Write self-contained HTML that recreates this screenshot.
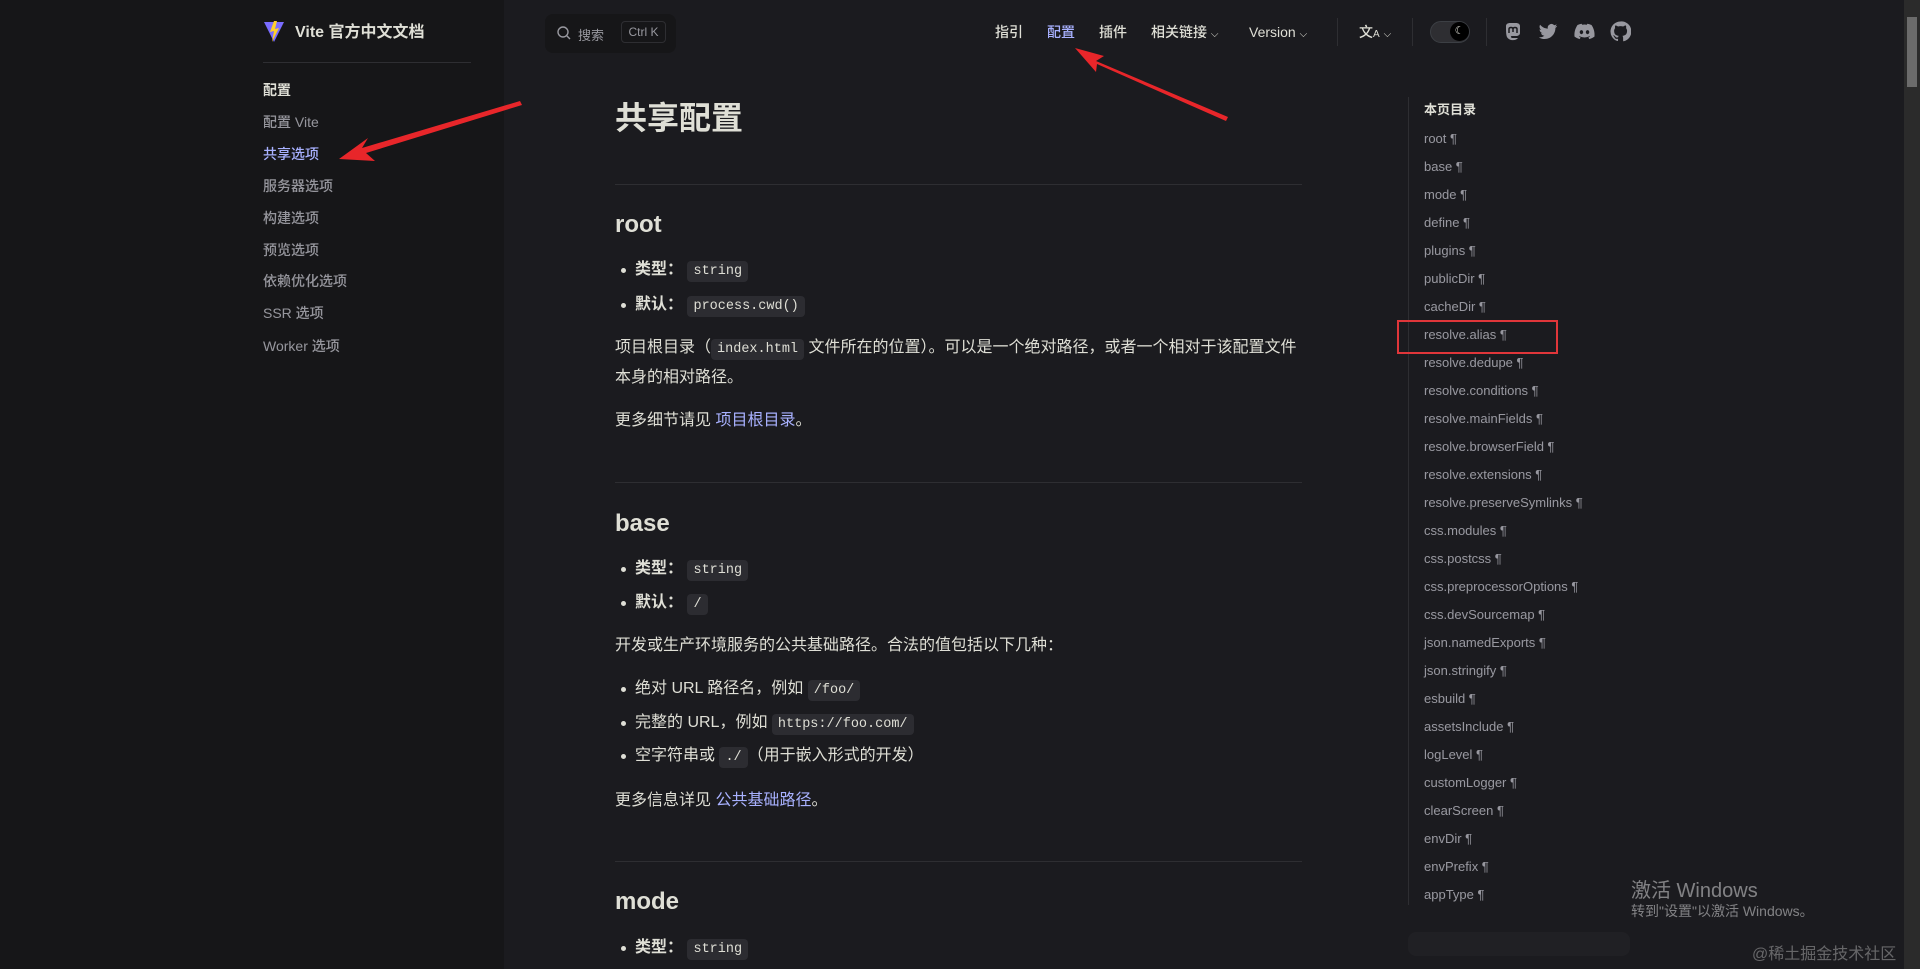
<!DOCTYPE html>
<html><head><meta charset="utf-8"><style>
*{margin:0;padding:0;box-sizing:border-box}
body{width:1920px;height:969px;overflow:hidden;background:#1b1b1f;font-family:"Liberation Sans","Noto Sans CJK SC",sans-serif;color:#dfdfd6;position:relative}
.a{position:absolute;white-space:nowrap}
.side{position:absolute;left:0;top:0;width:504px;height:969px;background:#161618}
.sl{position:absolute;left:263px;font-size:14px;color:rgba(235,235,245,.6);font-weight:500;line-height:20px}
.nav{position:absolute;top:22px;font-size:14px;font-weight:500;color:#dfdfd6;line-height:20px}
code{font-family:"Liberation Mono",monospace;font-size:13.5px;background:#2c2c31;color:#dfdfd6;padding:3px 6px;border-radius:4px}
.p{position:absolute;left:615px;font-size:16px;line-height:24px;color:#dfdfd6;white-space:nowrap}
.li{position:absolute;left:635px;font-size:16px;line-height:24px;white-space:nowrap}
.li:before{content:"";position:absolute;left:-14px;top:10px;width:5px;height:5px;border-radius:50%;background:#dfdfd6}
.h2{position:absolute;left:615px;font-size:24px;font-weight:600;line-height:32px}
.hr{position:absolute;left:615px;width:687px;height:1px;background:#2e2e32}
.toc{position:absolute;left:1424px;font-size:13px;font-weight:500;color:rgba(235,235,245,.6);line-height:20px}
a{color:#a8b1ff;text-decoration:none}
</style></head><body>
<div class="side"></div>
<svg class="a" style="left:263px;top:20px" width="22" height="24" viewBox="0 0 22 24"><path d="M1 2 L11 22 L21 2 Z" fill="#7a6cff"/><path d="M11 1 L7 12 L11 11 L9 22 L16 8 L12 9 L14 1Z" fill="#ffd028"/></svg>
<div class="a" style="left:295px;top:22px;font-size:16px;font-weight:700;color:#dfdfd6;line-height:22px">Vite 官方中文文档</div>
<div class="a" style="left:263px;top:62px;width:208px;height:1px;background:#2e2e32"></div>
<div class="sl" style="top:80px;color:#dfdfd6;font-weight:700">配置</div>
<div class="sl" style="top:112px">配置 Vite</div>
<div class="sl" style="top:144px;color:#a8b1ff">共享选项</div>
<div class="sl" style="top:176px">服务器选项</div>
<div class="sl" style="top:208px">构建选项</div>
<div class="sl" style="top:240px">预览选项</div>
<div class="sl" style="top:271px">依赖优化选项</div>
<div class="sl" style="top:303px">SSR 选项</div>
<div class="sl" style="top:336px">Worker 选项</div>
<div class="a" style="left:545px;top:14px;width:131px;height:39px;background:#161618;border-radius:8px"></div>
<svg class="a" style="left:556px;top:25px" width="16" height="16" viewBox="0 0 16 16"><circle cx="7" cy="7" r="5" fill="none" stroke="#98989f" stroke-width="1.4"/><path d="M11 11l3 3" stroke="#98989f" stroke-width="1.4"/></svg>
<div class="a" style="left:578px;top:25px;font-size:13px;color:#98989f">搜索</div>
<div class="a" style="left:621px;top:21px;width:45px;height:22px;border:1px solid #2e2e32;border-radius:4px;font-size:12px;color:#98989f;text-align:center;line-height:20px">Ctrl K</div>
<div class="nav" style="left:995px">指引</div>
<div class="nav" style="left:1047px;color:#a8b1ff">配置</div>
<div class="nav" style="left:1099px">插件</div>
<div class="nav" style="left:1151px">相关链接 <span style="font-size:10px">⌵</span></div>
<div class="nav" style="left:1249px">Version <span style="font-size:10px">⌵</span></div>
<div class="a" style="left:1337px;top:18px;width:1px;height:28px;background:#2e2e32"></div>
<div class="nav" style="left:1359px;font-size:14px">文<span style="font-size:10px">A</span> <span style="font-size:10px">⌵</span></div>
<div class="a" style="left:1412px;top:18px;width:1px;height:28px;background:#2e2e32"></div>
<div class="a" style="left:1430px;top:21px;width:40px;height:22px;border-radius:11px;background:#2e2e32;border:1px solid #3c3f44"></div>
<div class="a" style="left:1450px;top:22px;width:19px;height:19px;border-radius:50%;background:#000;color:#dfdfd6;font-size:11px;text-align:center;line-height:19px">☾</div>
<div class="a" style="left:1486px;top:18px;width:1px;height:28px;background:#2e2e32"></div>
<svg class="a" style="left:1503px;top:22px" width="20" height="20" viewBox="0 0 20 20"><path d="M3 4c0-2 2-3 4-3h6c2 0 4 1 4 3v7c0 2-2 3-4 3H9c-1 0-2 1 0 2h6c-2 3-9 3-11-1C3 13 3 8 3 4z" fill="#98989f"/><path d="M6 11V7c0-2 4-2 4 0v3M10 10V7c0-2 4-2 4 0v4" stroke="#1b1b1f" stroke-width="1.5" fill="none"/></svg>
<svg class="a" style="left:1538px;top:22px" width="20" height="20" viewBox="0 0 24 24"><path d="M23 4.6c-.8.4-1.7.6-2.6.7.9-.6 1.6-1.4 2-2.5-.9.5-1.9.9-2.9 1.1A4.5 4.5 0 0 0 11.8 8C8 7.8 4.7 6 2.5 3.3c-1.3 2.2-.5 4.8 1.4 6.1-.7 0-1.4-.2-2-.6 0 2.2 1.6 4.1 3.6 4.5-.7.2-1.4.2-2 .1.6 1.8 2.3 3.1 4.2 3.1A9 9 0 0 1 1 18.4 12.8 12.8 0 0 0 8 20.4c8.3 0 13-7 12.9-13.3.9-.6 1.6-1.4 2.1-2.5z" fill="#98989f"/></svg>
<svg class="a" style="left:1574px;top:22px" width="21" height="20" viewBox="0 0 24 20"><path d="M20 2A19 19 0 0 0 15.3.5l-.6 1.2a18 18 0 0 0-5.4 0L8.7.5A19 19 0 0 0 4 2C1 6.5.2 10.9.6 15.3A19 19 0 0 0 6.4 18.2l1.2-1.9c-.7-.3-1.3-.6-1.9-1l.5-.4a13.5 13.5 0 0 0 11.6 0l.5.4c-.6.4-1.2.7-1.9 1l1.2 1.9a19 19 0 0 0 5.8-2.9C23.9 10.2 22.6 5.8 20 2zM8.5 12.5c-1.1 0-2-1-2-2.3s.9-2.3 2-2.3 2 1 2 2.3-.9 2.3-2 2.3zm7 0c-1.1 0-2-1-2-2.3s.9-2.3 2-2.3 2 1 2 2.3-.9 2.3-2 2.3z" fill="#98989f"/></svg>
<svg class="a" style="left:1610px;top:21px" width="21" height="21" viewBox="0 0 24 24"><path d="M12 .5a11.5 11.5 0 0 0-3.6 22.4c.6.1.8-.3.8-.6v-2c-3.2.7-3.9-1.5-3.9-1.5-.5-1.3-1.3-1.7-1.3-1.7-1-.7.1-.7.1-.7 1.2.1 1.8 1.2 1.8 1.2 1 1.8 2.7 1.3 3.4 1 .1-.8.4-1.3.7-1.6-2.6-.3-5.3-1.3-5.3-5.7 0-1.3.5-2.3 1.2-3.1-.1-.3-.5-1.5.1-3.1 0 0 1-.3 3.2 1.2a11 11 0 0 1 5.8 0c2.2-1.5 3.2-1.2 3.2-1.2.6 1.6.2 2.8.1 3.1.7.8 1.2 1.8 1.2 3.1 0 4.4-2.7 5.4-5.3 5.7.4.4.8 1.1.8 2.2v3.3c0 .3.2.7.8.6A11.5 11.5 0 0 0 12 .5z" fill="#98989f"/></svg>
<div class="a" style="left:615px;top:99px;font-size:32px;font-weight:700;line-height:38px">共享配置</div>
<div class="hr" style="top:184px"></div>
<div class="h2" style="top:209px">root</div>
<div class="li" style="top:258px"><b>类型：</b> <code>string</code></div>
<div class="li" style="top:293px"><b>默认：</b> <code>process.cwd()</code></div>
<div class="p" style="top:336px">项目根目录（<code>index.html</code> 文件所在的位置）。可以是一个绝对路径，或者一个相对于该配置文件</div>
<div class="p" style="top:366px">本身的相对路径。</div>
<div class="p" style="top:409px">更多细节请见 <a>项目根目录</a>。</div>
<div class="hr" style="top:482px"></div>
<div class="h2" style="top:508px">base</div>
<div class="li" style="top:557px"><b>类型：</b> <code>string</code></div>
<div class="li" style="top:591px"><b>默认：</b> <code>/</code></div>
<div class="p" style="top:634px">开发或生产环境服务的公共基础路径。合法的值包括以下几种：</div>
<div class="li" style="top:677px">绝对 URL 路径名，例如 <code>/foo/</code></div>
<div class="li" style="top:711px">完整的 URL，例如 <code>https://foo.com/</code></div>
<div class="li" style="top:744px">空字符串或 <code>./</code>（用于嵌入形式的开发）</div>
<div class="p" style="top:789px">更多信息详见 <a>公共基础路径</a>。</div>
<div class="hr" style="top:861px"></div>
<div class="h2" style="top:886px">mode</div>
<div class="li" style="top:936px"><b>类型：</b> <code>string</code></div>
<div class="a" style="left:1408px;top:97px;width:1px;height:808px;background:#2e2e32"></div>
<div class="toc" style="top:100px;color:#dfdfd6;font-weight:700">本页目录</div>
<div class="toc" style="top:129px">root ¶</div>
<div class="toc" style="top:157px">base ¶</div>
<div class="toc" style="top:185px">mode ¶</div>
<div class="toc" style="top:213px">define ¶</div>
<div class="toc" style="top:241px">plugins ¶</div>
<div class="toc" style="top:269px">publicDir ¶</div>
<div class="toc" style="top:297px">cacheDir ¶</div>
<div class="toc" style="top:325px">resolve.alias ¶</div>
<div class="toc" style="top:353px">resolve.dedupe ¶</div>
<div class="toc" style="top:381px">resolve.conditions ¶</div>
<div class="toc" style="top:409px">resolve.mainFields ¶</div>
<div class="toc" style="top:437px">resolve.browserField ¶</div>
<div class="toc" style="top:465px">resolve.extensions ¶</div>
<div class="toc" style="top:493px">resolve.preserveSymlinks ¶</div>
<div class="toc" style="top:521px">css.modules ¶</div>
<div class="toc" style="top:549px">css.postcss ¶</div>
<div class="toc" style="top:577px">css.preprocessorOptions ¶</div>
<div class="toc" style="top:605px">css.devSourcemap ¶</div>
<div class="toc" style="top:633px">json.namedExports ¶</div>
<div class="toc" style="top:661px">json.stringify ¶</div>
<div class="toc" style="top:689px">esbuild ¶</div>
<div class="toc" style="top:717px">assetsInclude ¶</div>
<div class="toc" style="top:745px">logLevel ¶</div>
<div class="toc" style="top:773px">customLogger ¶</div>
<div class="toc" style="top:801px">clearScreen ¶</div>
<div class="toc" style="top:829px">envDir ¶</div>
<div class="toc" style="top:857px">envPrefix ¶</div>
<div class="toc" style="top:885px">appType ¶</div>
<div class="a" style="left:1397px;top:320px;width:161px;height:34px;border:2px solid #e0363a"></div>
<div class="a" style="left:1408px;top:932px;width:222px;height:24px;background:#202024;border-radius:8px"></div>
<div class="a" style="left:1904px;top:0;width:16px;height:969px;background:#2b2b2b"></div>
<div class="a" style="left:1907px;top:17px;width:10px;height:70px;background:#6b6b6b"></div>
<div class="a" style="left:1631px;top:874px;font-size:20px;color:rgba(255,255,255,.45)">激活 Windows</div>
<div class="a" style="left:1631px;top:901px;font-size:14px;color:rgba(255,255,255,.45)">转到"设置"以激活 Windows。</div>
<div class="a" style="left:1752px;top:940px;font-size:16px;color:rgba(255,255,255,.33)">@稀土掘金技术社区</div>
<svg class="a" style="left:0;top:0" width="1920" height="969"><g fill="#e8262a">
<path d="M520 101 L362 148 L368 138 L339 159 L375 161 L366 153 L522 105Z"/>
<path d="M1228 117 L1096 61 L1104 56 L1075 48 L1096 72 L1097 64 L1226 121Z"/>
</g></svg>
</body></html>
